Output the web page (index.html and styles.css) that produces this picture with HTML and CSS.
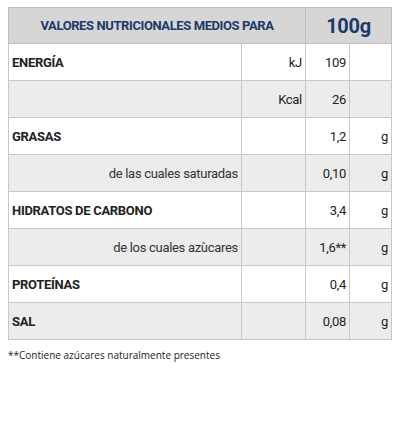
FILE: index.html
```html
<!DOCTYPE html>
<html lang="es">
<head>
    <meta charset="UTF-8">
    <title>Valores nutricionales</title>
    <link rel="stylesheet" href="styles.css">
</head>
<body>
<table class="nutri">
    <colgroup>
        <col class="col-name">
        <col class="col-unit">
        <col class="col-val">
        <col class="col-g">
    </colgroup>
    <tr class="head">
        <th colspan="2" class="head-title">VALORES NUTRICIONALES MEDIOS PARA</th>
        <th colspan="2" class="head-qty">100g</th>
    </tr>
    <tr>
        <td class="name">ENERGÍA</td>
        <td class="unit">kJ</td>
        <td class="val">109</td>
        <td class="g"></td>
    </tr>
    <tr class="grey">
        <td class="name"></td>
        <td class="unit">Kcal</td>
        <td class="val">26</td>
        <td class="g"></td>
    </tr>
    <tr>
        <td class="name">GRASAS</td>
        <td class="unit"></td>
        <td class="val">1,2</td>
        <td class="g">g</td>
    </tr>
    <tr class="grey">
        <td class="sub">de las cuales saturadas</td>
        <td class="unit"></td>
        <td class="val">0,10</td>
        <td class="g">g</td>
    </tr>
    <tr>
        <td class="name">HIDRATOS DE CARBONO</td>
        <td class="unit"></td>
        <td class="val">3,4</td>
        <td class="g">g</td>
    </tr>
    <tr class="grey">
        <td class="sub">de los cuales azùcares</td>
        <td class="unit"></td>
        <td class="val">1,6**</td>
        <td class="g">g</td>
    </tr>
    <tr>
        <td class="name">PROTEÍNAS</td>
        <td class="unit"></td>
        <td class="val">0,4</td>
        <td class="g">g</td>
    </tr>
    <tr class="grey">
        <td class="name">SAL</td>
        <td class="unit"></td>
        <td class="val">0,08</td>
        <td class="g">g</td>
    </tr>
</table>
<p class="note">**Contiene azúcares naturalmente presentes</p>
</body>
</html>
```
FILE: styles.css
```css
body {
    margin: 7px 0 0 8px;
    background: #fff;
    font-family: "Roboto", "Liberation Sans", sans-serif;
    color: #222;
}

.nutri {
    width: 383px;
    border-collapse: collapse;
    table-layout: fixed;
    font-size: 13px;
    letter-spacing: -0.3px;
}

.col-name { width: 233px; }
.col-unit { width: 64px; }
.col-val { width: 44px; }
.col-g { width: 42px; }

.nutri td,
.nutri th {
    border: 1px solid #c8c8c8;
    height: 36px;
    padding: 0 3px;
    white-space: nowrap;
}

.head th {
    background-color: #d6d6d6;
    color: #1c3a68;
    height: 35px;
    border-color: #bfbfbf;
}

.head-title {
    font-size: 13px;
    font-weight: bold;
    letter-spacing: -0.4px;
    text-align: center;
}

.head-qty {
    font-size: 20px;
    font-weight: bold;
    text-align: center;
}

.grey td {
    background-color: #ececec;
}

.name {
    font-weight: bold;
    text-align: left;
}

.sub {
    text-align: right;
    color: #333;
}

.unit,
.val,
.g {
    text-align: right;
}

.note {
    margin: 8px 0 0 0;
    font-family: "Open Sans", sans-serif;
    font-size: 10px;
    letter-spacing: 0;
    color: #222;
}
```
